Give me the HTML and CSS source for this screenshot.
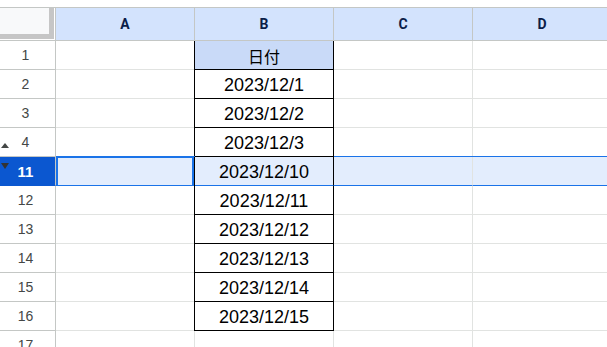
FILE: index.html
```html
<!DOCTYPE html>
<html>
<head>
    <title>Sheet</title>
    <link rel="stylesheet" href="styles.css">
</head>
<body>
<div class="sheet">
    <div class="topbar"></div>
    <div class="row head">
        <div class="rh corner"><div class="corner-box"></div></div>
        <div class="ch">A</div>
        <div class="ch">B</div>
        <div class="ch">C</div>
        <div class="ch">D</div>
    </div>
    <div class="row">
        <div class="rh">1</div>
        <div class="cell"></div>
        <div class="cell b title">日付</div>
        <div class="cell"></div>
        <div class="cell"></div>
    </div>
    <div class="row">
        <div class="rh">2</div>
        <div class="cell"></div>
        <div class="cell b">2023/12/1</div>
        <div class="cell"></div>
        <div class="cell"></div>
    </div>
    <div class="row">
        <div class="rh">3</div>
        <div class="cell"></div>
        <div class="cell b">2023/12/2</div>
        <div class="cell"></div>
        <div class="cell"></div>
    </div>
    <div class="row">
        <div class="rh">4<span class="arrow-up"></span></div>
        <div class="cell"></div>
        <div class="cell b">2023/12/3</div>
        <div class="cell"></div>
        <div class="cell"></div>
    </div>
    <div class="row sel">
        <div class="rh">11<span class="arrow-down"></span></div>
        <div class="cell active"></div>
        <div class="cell b">2023/12/10</div>
        <div class="cell"></div>
        <div class="cell"></div>
    </div>
    <div class="row">
        <div class="rh">12</div>
        <div class="cell"></div>
        <div class="cell b">2023/12/11</div>
        <div class="cell"></div>
        <div class="cell"></div>
    </div>
    <div class="row">
        <div class="rh">13</div>
        <div class="cell"></div>
        <div class="cell b">2023/12/12</div>
        <div class="cell"></div>
        <div class="cell"></div>
    </div>
    <div class="row">
        <div class="rh">14</div>
        <div class="cell"></div>
        <div class="cell b">2023/12/13</div>
        <div class="cell"></div>
        <div class="cell"></div>
    </div>
    <div class="row">
        <div class="rh">15</div>
        <div class="cell"></div>
        <div class="cell b">2023/12/14</div>
        <div class="cell"></div>
        <div class="cell"></div>
    </div>
    <div class="row">
        <div class="rh">16</div>
        <div class="cell"></div>
        <div class="cell b">2023/12/15</div>
        <div class="cell"></div>
        <div class="cell"></div>
    </div>
    <div class="row">
        <div class="rh">17</div>
        <div class="cell"></div>
        <div class="cell"></div>
        <div class="cell"></div>
        <div class="cell"></div>
    </div>
</div>
</body>
</html>
```

FILE: styles.css
```css
body {
  margin: 0;
  overflow: hidden;
  background: #fff;
  font-family: "Liberation Sans", Arial, sans-serif;
}

.sheet {
  width: 620px;
}

.topbar {
  height: 7px;
  border-bottom: 1px solid #c4c7c5;
}

.row {
  display: flex;
  height: 29px;
}

.row.head {
  height: 33px;
}

.rh {
  position: relative;
  flex: 0 0 56px;
  box-sizing: border-box;
  border-right: 1px solid #c4c7c5;
  border-bottom: 1px solid #c4c7c5;
  display: flex;
  align-items: center;
  justify-content: center;
  padding-right: 4px;
  font-family: "Liberation Sans", Arial, sans-serif;
  font-size: 14px;
  color: #444746;
}

.corner {
  padding: 0;
  align-items: stretch;
  justify-content: stretch;
}

.corner-box {
  flex: 1;
  margin: 0 1px 1px 0;
  background: #f8f9fa;
  border-right: 5px solid #c6c6c6;
  border-bottom: 5px solid #c6c6c6;
}

.ch {
  flex: 0 0 139px;
  box-sizing: border-box;
  border-right: 1px solid #c4c7c5;
  border-bottom: 1px solid #c4c7c5;
  background: #d3e3fd;
  display: flex;
  align-items: center;
  justify-content: center;
  font-family: Roboto, "Liberation Sans", sans-serif;
  font-weight: bold;
  font-size: 14px;
  color: #0b1d48;
}

.cell {
  flex: 0 0 139px;
  box-sizing: border-box;
  border-right: 1px solid #e1e3e1;
  border-bottom: 1px solid #e1e3e1;
  display: flex;
  align-items: center;
  justify-content: center;
  padding-top: 3px;
  font-size: 18px;
  color: #000;
}

.cell.b {
  border-right: 1px solid #000;
  border-bottom: 1px solid #000;
  box-shadow: -1px 0 0 #000;
}

.title {
  background: #c9daf8;
  font-family: "Noto Sans CJK JP", sans-serif;
  font-size: 16px;
  padding-top: 1px;
}

.row:last-child .cell.b {
  border-right: 1px solid #e1e3e1;
  border-bottom: 1px solid #e1e3e1;
  box-shadow: none;
}

.sel .cell {
  background: #e3edfd;
  border-bottom: 1px solid #1a73e8;
  box-shadow: 0 -1px 0 #1a73e8;
}

.sel .cell.b {
  border-bottom: 1px solid #1a73e8;
  box-shadow: 0 -1px 0 #000, -1px 0 0 #000;
}

.sel .cell.active {
  box-shadow: 0 -1px 0 #1a73e8, inset 2px 0 0 #1a73e8, inset -2px 0 0 #1a73e8, inset 0 1px 0 #1a73e8;
  border-right-color: #1a73e8;
}

.sel .rh {
  background: #0b57d0;
  color: #fff;
  font-weight: bold;
  font-size: 15px;
  border-bottom-color: #0b57d0;
}

.arrow-up {
  position: absolute;
  left: 1px;
  bottom: 8px;
  border-left: 4px solid transparent;
  border-right: 4px solid transparent;
  border-bottom: 5px solid #444746;
}

.arrow-down {
  position: absolute;
  left: 1px;
  top: 6px;
  border-left: 4px solid transparent;
  border-right: 4px solid transparent;
  border-top: 6px solid #333;
}
```
